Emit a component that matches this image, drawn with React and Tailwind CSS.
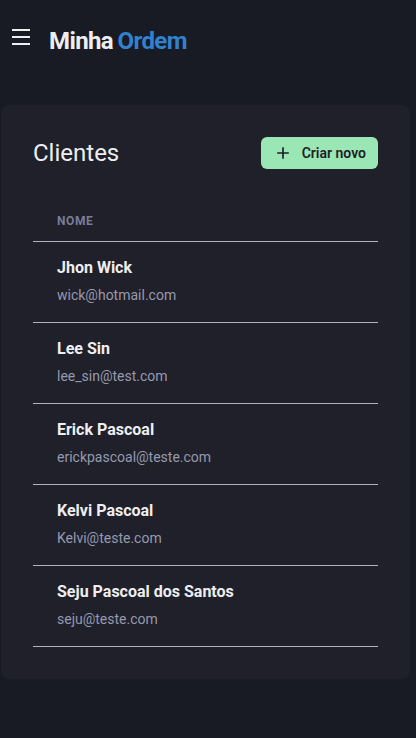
import { RiMenuLine, RiAddLine } from "react-icons/ri";

const clients = [
  { name: "Jhon Wick", email: "wick@hotmail.com" },
  { name: "Lee Sin", email: "lee_sin@test.com" },
  { name: "Erick Pascoal", email: "erickpascoal@teste.com" },
  { name: "Kelvi Pascoal", email: "Kelvi@teste.com" },
  { name: "Seju Pascoal dos Santos", email: "seju@teste.com" },
];

function Header() {
  return (
    <header className="flex h-[82px] items-center px-[9px]">
      <button type="button" aria-label="Abrir menu" className="mb-2 text-2xl">
        <RiMenuLine />
      </button>
      <p className="ml-4 text-2xl font-bold tracking-tight">
        Minha <span className="-ml-px text-[#3182ce]">Ordem</span>
      </p>
    </header>
  );
}

function ClientRow({ name, email }) {
  return (
    <tr className="border-b border-[#b0b1bc]">
      <td className="px-6 py-4">
        <p className="text-base leading-5 font-bold">{name}</p>
        <a href={"mailto:" + email} className="mt-1.5 block text-sm leading-[22px] text-[#9699b0]">
          {email}
        </a>
      </td>
    </tr>
  );
}

export default function App() {
  return (
    <div className="min-h-screen bg-[#181b23] font-[Roboto,sans-serif] text-[#eeeef2]">
      <Header />
      <main className="mt-[23px] mr-1.5 ml-px rounded-lg bg-[#1f2029] p-8">
        <div className="mb-8 flex items-center justify-between">
          <h1 className="text-2xl leading-8">Clientes</h1>
          <button
            type="button"
            className="flex h-8 items-center gap-[9px] rounded-md bg-[#9ae6b4] px-3 text-sm font-semibold text-[#1f2029]"
          >
            <RiAddLine className="size-5" />
            Criar novo
          </button>
        </div>
        <table className="w-full border-collapse">
          <thead>
            <tr className="border-b border-[#b0b1bc]">
              <th className="px-6 py-3 text-left text-xs leading-4 font-bold tracking-wider text-[#797d9a] uppercase">
                Nome
              </th>
            </tr>
          </thead>
          <tbody>
            {clients.map((client) => (
              <ClientRow key={client.email} {...client} />
            ))}
          </tbody>
        </table>
      </main>
    </div>
  );
}
